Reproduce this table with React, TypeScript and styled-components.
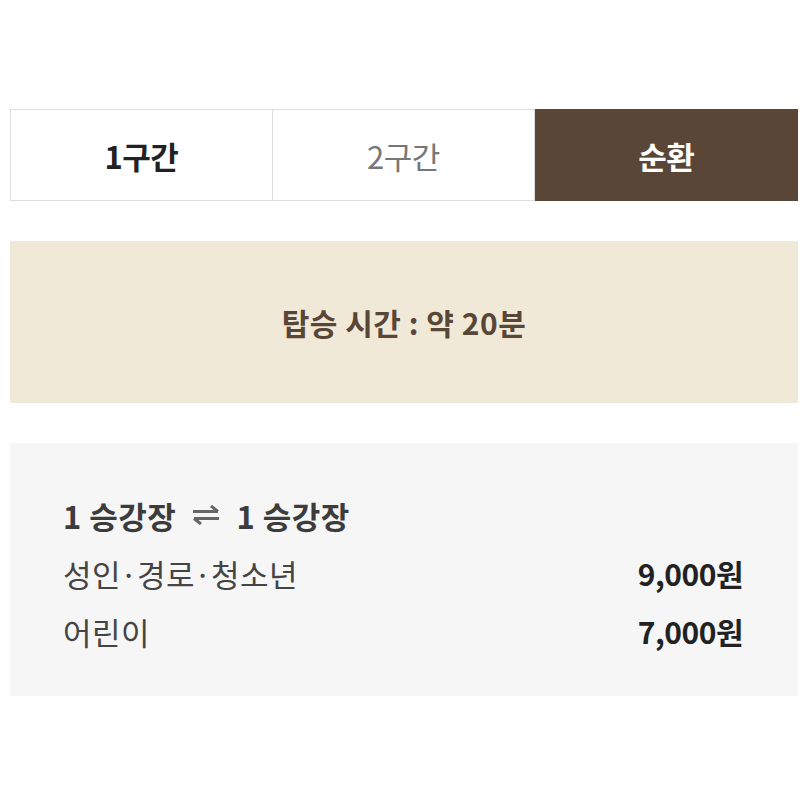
import React, { useState } from "react"
import styled, { createGlobalStyle } from "styled-components"

const GlobalStyle = createGlobalStyle`
	html, body {
		margin: 0;
		padding: 0;
		background: #ffffff;
	}
	body {
		font-family: "Noto Sans CJK KR", "Noto Sans", sans-serif;
		-webkit-font-smoothing: antialiased;
	}
`

const Page = styled.div`
	width: 788px;
	padding: 109px 0 0 10px;
	display: flex;
	flex-direction: column;
	gap: 40px;
`

const TabBar = styled.div`
	display: grid;
	grid-template-columns: repeat(3, 1fr);
	height: 92px;
`

const Tab = styled.button.withConfig({
	shouldForwardProp: (prop) => prop !== "isActive" && prop !== "isCurrent",
})<{ isActive: boolean; isCurrent: boolean }>`
	display: flex;
	align-items: center;
	justify-content: center;
	margin: 0;
	padding: 0;
	font-family: inherit;
	font-size: 31px;
	letter-spacing: -0.5px;
	cursor: pointer;
	border: 1px solid ${(props) => (props.isActive ? "#5a4636" : "#dddddd")};
	border-left-width: 0;
	background: ${(props) => (props.isActive ? "#5a4636" : "#ffffff")};
	color: ${(props) => (props.isActive ? "#ffffff" : props.isCurrent ? "#222222" : "#777777")};
	font-weight: ${(props) => (props.isActive || props.isCurrent ? 700 : 400)};

	&:first-child {
		border-left-width: 1px;
	}
`

const TimeBox = styled.div`
	height: 162px;
	background: #f1e9d8;
	display: flex;
	align-items: center;
	justify-content: center;
	color: #5a4636;
	font-size: 30px;
	font-weight: 700;
	letter-spacing: 0.5px;
`

const FareBox = styled.div`
	background: #f6f6f6;
	padding: 43px 55px 36px 53px;
	display: flex;
	flex-direction: column;
`

const RouteTitle = styled.div`
	display: flex;
	align-items: center;
	gap: 16px;
	height: 58px;
	color: #3c3c3c;
	font-size: 31px;
	font-weight: 700;
	letter-spacing: 0.5px;
`

const FareRow = styled.div`
	display: flex;
	align-items: center;
	justify-content: space-between;
	height: 58px;
`

const FareLabel = styled.span`
	color: #444444;
	font-size: 31px;
	font-weight: 400;
	letter-spacing: 0.5px;
`

const Dot = styled.span`
	margin: 0 -1px;
`

const Price = styled.span`
	color: #222222;
	font-size: 30px;
	font-weight: 700;
	letter-spacing: -0.5px;
`

const RoundTripIcon = () => (
	<svg width="28" height="20" viewBox="0 0 28 20" fill="none" stroke="#666666" strokeWidth="3" strokeLinecap="butt">
		<path d="M1 6.5H26M26 6.5L19 1" />
		<path d="M27 13.5H2M2 13.5L9 19" />
	</svg>
)

const tabs = ["1구간", "2구간", "순환"]

export default function App() {
	const [active, setActive] = useState(2)

	return (
		<>
			<GlobalStyle />
			<Page>
				<TabBar>
					{tabs.map((label, i) => (
						<Tab key={label} isActive={active === i} isCurrent={i === 0} onClick={() => setActive(i)}>
							{label}
						</Tab>
					))}
				</TabBar>

				<TimeBox>탑승 시간 : 약 20분</TimeBox>

				<FareBox>
					<RouteTitle>
						<span>1 승강장</span>
						<RoundTripIcon />
						<span>1 승강장</span>
					</RouteTitle>
					<FareRow>
						<FareLabel>
							성인<Dot>·</Dot>경로<Dot>·</Dot>청소년
						</FareLabel>
						<Price>9,000원</Price>
					</FareRow>
					<FareRow>
						<FareLabel>어린이</FareLabel>
						<Price>7,000원</Price>
					</FareRow>
				</FareBox>
			</Page>
		</>
	)
}
